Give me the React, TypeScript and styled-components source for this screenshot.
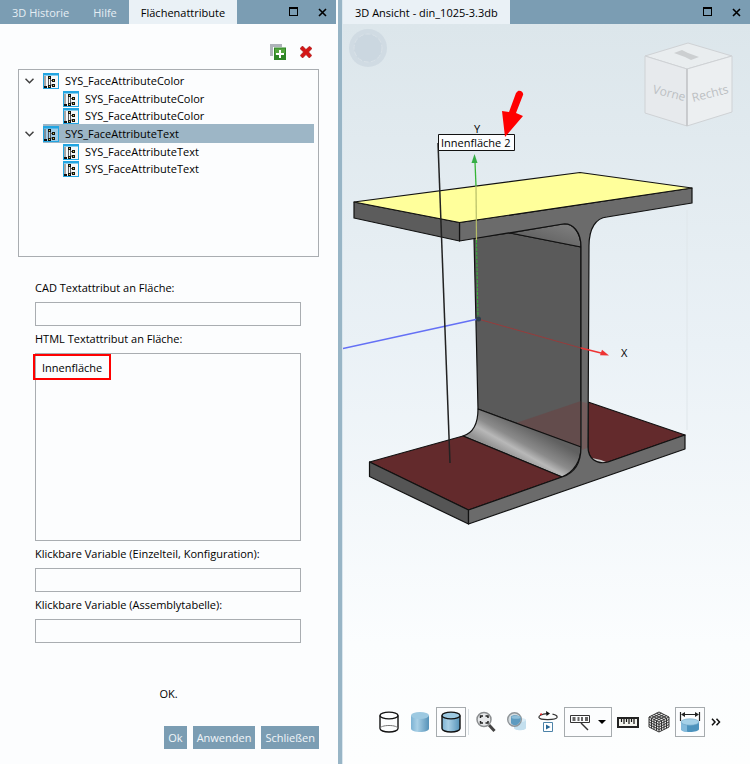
import React, { useState } from "react";
import styled, { createGlobalStyle, css } from "styled-components";

const color = {
  bar: "#7b9db3",
  tab: "#eaf1f6",
  panel: "#fcfdfe",
  line: "#a9adb1",
  select: "#9db6c6",
  ink: "#000000",
};

const GlobalStyle = createGlobalStyle`
  *, *::before, *::after { box-sizing: border-box; }
  body { margin: 0; background: ${color.panel}; }
  body, button, input, textarea {
    font-family: "Open Sans", "Noto Sans", sans-serif;
    font-size: 11px;
    line-height: 16px;
    color: ${color.ink};
  }
`;

const Page = styled.div`
  display: grid;
  grid-template-columns: minmax(280px, 336fr) 7px minmax(0, 407fr);
  min-height: 100vh;
`;

const Pane = styled.section`
  display: flex;
  flex-direction: column;
  min-width: 0;
`;

const ViewPane = styled(Pane)`
  background: linear-gradient(#dce6eb 24px, #eaf1f6 45%, #fbfdfe 84%, #fdfefe);
`;

const Splitter = styled.div`
  border-left: 2px solid ${color.panel};
  border-right: 1px solid #dbe7ee;
  background: #98b5c6;
`;

const TitleBar = styled.header`
  display: flex;
  align-items: center;
  height: 24px;
  background: ${color.bar};
`;

const TabList = styled.div`
  display: flex;
  flex: 1;
  height: 100%;
`;

const Tab = styled.button<{ $active?: boolean }>`
  border: 0;
  padding: 2px 12px 0;
  white-space: nowrap;
  background: ${(p) => (p.$active ? color.tab : "transparent")};
  color: ${(p) => (p.$active ? color.ink : "#e6eef3")};
`;

const BarButton = styled.button`
  display: grid;
  place-items: center;
  width: 28px;
  height: 24px;
  padding: 0;
  border: 0;
  background: transparent;
`;

const Actions = styled.div`
  display: flex;
  justify-content: flex-end;
  gap: 8px;
  padding: 18px 20px 7px;
`;

const IconButton = styled.button`
  display: grid;
  place-items: center;
  width: 20px;
  height: 20px;
  padding: 0;
  border: 0;
  background: transparent;
`;

const Tree = styled.ul`
  list-style: none;
  margin: 0 17px 0 18px;
  padding: 1px 4px 0 6px;
  height: 188px;
  border: 1px solid ${color.line};
`;

const Branch = styled.ul`
  list-style: none;
  margin: 0;
  padding: 0 0 0 38px;
`;

const NodeLine = styled.div`
  display: flex;
  align-items: center;
`;

const Toggle = styled.button`
  display: grid;
  place-items: center start;
  width: 18px;
  height: 19px;
  padding: 0;
  border: 0;
  background: transparent;
`;

const NodeLabel = styled.span<{ $root?: boolean; $selected?: boolean }>`
  display: flex;
  flex: 1;
  align-items: center;
  gap: 6px;
  height: ${(p) => (p.$root ? 19 : 17)}px;
  background: ${(p) => (p.$selected ? color.select : "transparent")};
  font-size: 11px;
`;

const Form = styled.form`
  display: flex;
  flex: 1;
  flex-direction: column;
  padding: 22px 17px 14px 18px;
`;

const Field = styled.div`
  display: flex;
  flex-direction: column;
  gap: 6px;
  margin: 0 18px 4px 17px;
  padding-top: 1px;
`;

const box = css`
  display: block;
  width: 100%;
  border: 1px solid ${color.line};
  border-radius: 0;
  background: ${color.panel};
  outline: 0;
`;

const TextInput = styled.input`
  ${box}
  height: 24px;
  padding: 0 6px;
`;

const TextArea = styled.textarea`
  ${box}
  height: 188px;
  padding: 6px;
  resize: none;
`;

const MarkedArea = styled.div`
  position: relative;
`;

const Mark = styled.span`
  position: absolute;
  top: 1px;
  left: -2px;
  width: 78px;
  height: 26px;
  border: 2px solid #ff0000;
  pointer-events: none;
`;

const Status = styled.p`
  margin: 39px 0 24px;
  text-align: center;
`;

const Buttons = styled.div`
  display: flex;
  justify-content: flex-end;
  gap: 6px;
`;

const PushButton = styled.button`
  height: 23px;
  padding: 0 4px;
  border: 0;
  background: ${color.bar};
  color: #f1f6f9;
`;

const Scene = styled.svg`
  display: block;
  flex: 1;
  width: 100%;
  min-height: 0;
  font-family: "Open Sans", sans-serif;
  font-size: 11px;
`;

const Tools = styled.div`
  display: flex;
  align-items: center;
  justify-content: center;
  gap: 1px;
  padding: 7px 20px 27px 26px;
`;

const Tool = styled.button<{ $framed?: boolean; $wide?: boolean }>`
  display: flex;
  align-items: center;
  justify-content: center;
  flex: none;
  gap: 8px;
  width: ${(p) => (p.$wide ? 48 : 30)}px;
  height: 30px;
  padding: 0;
  border: 1px solid ${(p) => (p.$framed ? "#a6abae" : "transparent")};
  background: ${(p) => (p.$framed ? "#fcfdfe" : "transparent")};
`;

const More = styled(Tool)`
  width: 20px;
`;

const Divider = styled.span`
  width: 1px;
  height: 26px;
  margin: 0 1px;
  background: #d9dfe3;
`;

const MaximizeIcon = () => (
  <svg width="10" height="10" viewBox="0 0 10 10" fill="none" stroke="#000">
    <path d="M.5 1h8M.5 0v9M8.500 0v9M0 8.500h9" strokeWidth="1" />
    <path d="M0 1h9" strokeWidth="2" />
  </svg>
);

const CloseIcon = () => (
  <svg width="9" height="9" viewBox="0 0 9 9" stroke="#000" strokeWidth="1.600">
    <path d="M1 1l7 7M8 1l-7 7" />
  </svg>
);

const AddIcon = () => (
  <svg width="16" height="16" viewBox="0 0 16 16">
    <path d="M0 0h12v3H3v9H0z" fill="#aeb3b9" />
    <path d="M4 3.500h12V16H4z" fill="#2f8526" />
    <path d="M5 4.500h10V9L5 11z" fill="#53a53d" />
    <path d="M10 6v8M6 10h8" stroke="#fff" strokeWidth="2" />
  </svg>
);

const DeleteIcon = () => (
  <svg width="12" height="12" viewBox="0 0 12 12">
    <path d="M2.500 0L6 3.500 9.500.3 12 2.500 8.600 6l3.200 3.500L9.300 12 6 8.600 2.600 12 .2 9.500 3.500 6 0 2.600z" fill="#d51616" stroke="#9c1010" strokeWidth=".6" />
  </svg>
);

const ChevronIcon = () => (
  <svg width="9" height="6" viewBox="0 0 9 6" fill="none" stroke="#404040" strokeWidth="1.500">
    <path d="M.5.8l4 4 4-4" />
  </svg>
);

const NodeIcon = ({ selected }: { selected?: boolean }) => (
  <svg width="16" height="16" viewBox="0 0 16 16">
    <path d="M0 0h16v16H0z" fill="#22a5e2" />
    <path d="M1 2.500h14V15H1z" fill={selected ? "#9fcbe6" : "#f5f7f8"} />
    <path d="M2 3v11M5.500 4v10M6 4.500h1M7.500 5v8M8 7.500h2M8 12h2" stroke="#555" fill="none" />
    <path d="M1 13h3v2H1zM5 12h3v3H5zM5 3h3v3H5zM9 6h3v3H9zM9 11h3v3H9z" fill="#111" />
    <path d="M6 4h1v1H6zM10 7h1v1h-1zM10 12h1v1h-1zM6 13h1v1H6z" fill="#d9c34a" />
  </svg>
);

const Cylinder = ({ filled, outlined }: { filled?: boolean; outlined?: boolean }) => {
  const line = outlined ? "#111" : "none";
  return (
    <svg width="20" height="22" viewBox="0 0 20 22" strokeWidth="1.400">
      <defs>
        <linearGradient id="steel">
          <stop offset="0" stopColor="#7cb2d3" />
          <stop offset=".35" stopColor="#a9d0e6" />
          <stop offset="1" stopColor="#5592b8" />
        </linearGradient>
      </defs>
      <path d="M1 4.500v13C1 19.500 5 21 10 21s9-1.500 9-3.500v-13" fill={filled ? "url(#steel)" : "none"} stroke={line} />
      <ellipse cx="10" cy="4.500" rx="9" ry="3.400" fill={filled ? "#9dc9e1" : "none"} stroke={line} />
      {!filled && <path d="M1 17.500c0-1.700 4-3 9-3s9 1.300 9 3" fill="none" stroke="#777" strokeWidth="1" />}
    </svg>
  );
};

const ZoomIcon = () => (
  <svg width="20" height="22" viewBox="0 0 20 22" fill="none">
    <path d="M13 14l5.500 6" stroke="#444" strokeWidth="3" />
    <circle cx="8" cy="8.500" r="7" fill="#e6e8ea" stroke="#8b8e90" strokeWidth="1.500" />
    <path d="M4.500 7V5H7M9.500 5H12v2M12 10v2H9.500M7 12H4.500v-2" stroke="#222" strokeWidth="1.500" />
  </svg>
);

const LensIcon = () => (
  <svg width="20" height="22" viewBox="0 0 20 22">
    <path d="M7 9v8c0 3 12 3 12 0V9c-2-2-10-2-12 0z" fill="#c3dfee" />
    <ellipse cx="13" cy="9" rx="6" ry="2" fill="#d9ebf5" />
    <circle cx="7.500" cy="8.500" r="6.800" fill="#d3dbdf" stroke="#8e9498" strokeWidth="1.400" />
    <path d="M4 5.500c2-1.700 7-1.500 9.500.6C14.500 10 12 14 8 14.500 6 14 4 13 4 12z" fill="#5d9bc0" />
    <ellipse cx="9" cy="6.200" rx="4.500" ry="1.500" fill="#8fbfd9" />
  </svg>
);

const OrbitIcon = () => (
  <svg width="20" height="22" viewBox="0 0 20 22" fill="none">
    <path d="M14.500 3.200C18 4 19.500 5 19 6.500c-1 2.600-17 3-18 0C.5 4.500 4 3 9 2.600" stroke="#333" strokeWidth="1.200" />
    <path d="M8 0l4 2.400L8.500 5z" fill="#111" />
    <path d="M2 3.500l2-.5" stroke="#d22" strokeWidth="1.500" />
    <path d="M5.500 11.500h9v9h-9z" fill="#fff" stroke="#4d83a8" />
    <path d="M8 13.500l4.500 2.500L8 18.500z" fill="#256594" />
  </svg>
);

const NoteIcon = () => (
  <svg width="20" height="18" viewBox="0 0 20 18" fill="none" stroke="#333">
    <path d="M.5 2.500h19v7H.5z" />
    <path d="M2.500 5h3M7.500 5h2M11 5h2M15 5h3M2.500 7h3M7.500 7h2M11 7h2M15 7h3" strokeWidth="1.300" />
    <path d="M11 10l7 7" strokeWidth="1.400" />
  </svg>
);

const CaretIcon = () => (
  <svg width="8" height="4" viewBox="0 0 8 4">
    <path d="M0 0h8L4 4z" />
  </svg>
);

const RulerIcon = () => (
  <svg width="22" height="11" viewBox="0 0 22 11">
    <path d="M0 0h22v11H0z" fill="#222" />
    <path d="M2 2h18v7H2z" fill="#f4f4ee" />
    <path d="M4.500 2v3M7 2v5M9.500 2v3M12 2v5M14.500 2v3M17 2v5" stroke="#111" strokeWidth="1.200" />
  </svg>
);

const MeshIcon = () => (
  <svg width="22" height="22" viewBox="0 0 22 22" fill="none" stroke="#333" strokeWidth="1">
    <path d="M11 1l10 5v10l-10 5-10-5V6z" fill="#eee" />
    <path d="M1 6l10 5 10-5M11 11v10M3.500 4.700l10 5v10M6 3.500l10 5v10M8.500 2.200l10 5v10M13.500 2.200l-10 5v10M16 3.500l-10 5v10M18.500 4.700l-10 5v10M1 8.500l10 5 10-5M1 11l10 5 10-5M1 13.500l10 5 10-5" />
  </svg>
);

const MeasureIcon = () => (
  <svg width="22" height="22" viewBox="0 0 22 22">
    <path d="M2 11v7c0 4 18 4 18 0v-7" fill="#4d93bd" />
    <path d="M2 11v7c0 2 3 2.700 6 3V12z" fill="#83badb" />
    <ellipse cx="11" cy="11" rx="9" ry="3.200" fill="#a5d1e8" stroke="#6ca5c6" strokeWidth=".6" />
    <path d="M1.500 1v9M20.500 1v9M3 3.500h16" stroke="#222" fill="none" strokeWidth="1.200" />
    <path d="M2 3.500L6 1v5zM20 3.500L16 1v5z" fill="#222" />
  </svg>
);

const MoreIcon = () => (
  <svg width="10" height="8" viewBox="0 0 10 8" fill="none" stroke="#111" strokeWidth="1.500">
    <path d="M1 .8L4 4 1 7.200M5.500.8l3 3.200-3 3.200" />
  </svg>
);

const WindowButtons = () => (
  <>
    <BarButton type="button" aria-label="Maximieren"><MaximizeIcon /></BarButton>
    <BarButton type="button" aria-label="Schließen"><CloseIcon /></BarButton>
  </>
);

const nodes = [
  { name: "SYS_FaceAttributeColor", children: ["SYS_FaceAttributeColor", "SYS_FaceAttributeColor"], selected: false },
  { name: "SYS_FaceAttributeText", children: ["SYS_FaceAttributeText", "SYS_FaceAttributeText"], selected: true },
];

const AttributeTree = () => (
  <Tree role="tree" aria-label="Flächenattribute">
    {nodes.map((node) => (
      <li key={node.name} role="treeitem" aria-expanded="true" aria-selected={node.selected}>
        <NodeLine>
          <Toggle type="button" aria-label="Zuklappen"><ChevronIcon /></Toggle>
          <NodeLabel $root $selected={node.selected}>
            <NodeIcon selected={node.selected} />
            {node.name}
          </NodeLabel>
        </NodeLine>
        <Branch role="group">
          {node.children.map((child, i) => (
            <li key={i} role="treeitem">
              <NodeLabel><NodeIcon />{child}</NodeLabel>
            </li>
          ))}
        </Branch>
      </li>
    ))}
  </Tree>
);

const NavigationCube = () => (
  <g stroke="#cfd2d5" strokeLinejoin="round">
    <path d="M645 56l43-13 44 13-45 13z" fill="#e9edef" />
    <path d="M645 56l42 13v57l-42-13z" fill="#e7eaed" />
    <path d="M687 69l45-13v56l-45 14z" fill="#eceff1" />
    <path d="M687 69v57" stroke="#c3c6c9" strokeWidth="1.500" />
    <path d="M674 53l8-3 6 3 11 4-8 3-6-3z" fill="#cccfd1" stroke="none" />
    <g fill="#bcc0c3" stroke="none" fontSize="12">
      <text transform="translate(652 93) rotate(14)">Vorne</text>
      <text transform="translate(693 102) rotate(-14)" >Rechts</text>
    </g>
  </g>
);

const Beam = () => (
  <g stroke="#111" strokeWidth="1.200" strokeLinejoin="round">
    <path d="M588 402l97 33-77 27c-12 3-20-3-20-15z" fill="#632a2c" />
    <path d="M592 458c2 4 8 6 14 4l-5-2z" fill="#c9c9c9" stroke="none" />
    <path d="M474 238l36-5 71 14v200l-103-38z" fill="#5a5a5a" />
    <path d="M516 423l65-22v46z" fill="#674848" fillOpacity=".75" stroke="none" />
    <path d="M510 233l53-9c10-1 18 8 18 23z" fill="url(#upperFillet)" />
    <path d="M478 409l103 38c0 14-7 25-19 30l-99-41c10-3 15-13 15-27z" fill="url(#lowerFillet)" />
    <path d="M369.500 462l93.500-26 99 41-93.500 33z" fill="#632a2c" />
    <path d="M369.500 462v14.500l99 47.500v-14z" fill="#555" />
    <path
      d="M459.500 222.500L692 188v15l-85 14c-11 1-18 11-18 29l-1 201c0 11 8 18 20 15l77-27v14l-216.500 75v-14l93.500-33c13-4 19-14 19-30V247c0-15-8-24-18-23l-103.500 17z"
      fill="#6b6b6b"
    />
    <path d="M582 402l5 1v45l-5 2z" fill="#785757" fillOpacity=".7" stroke="none" />
    <path d="M354 202v16l105.500 23v-18.500z" fill="#5c5c5c" />
    <path d="M354 202l226-29.500L692 188l-232.500 34.500z" fill="#ffff9b" />
  </g>
);

const Axes = () => (
  <g fill="none">
    <path d="M343 348.500L478 319" stroke="#6470f5" strokeWidth="1.700" />
    <path d="M478 319l103 29" stroke="#963c3c" strokeWidth="1" />
    <path d="M581 348l20 5" stroke="#ee3333" strokeWidth="1.500" />
    <path d="M609 355.500l-9-.3 2-5.400z" fill="#e33" />
    <path d="M478 319l-1.500-79" stroke="#35b535" strokeDasharray="3 1" />
    <path d="M476.500 240l-.5-54" stroke="#b6bd68" strokeWidth="1.200" />
    <path d="M476 186l-1-24" stroke="#35b535" strokeWidth="1.300" />
    <path d="M474.500 154l3 9h-6z" fill="#35ad45" />
    <circle cx="478.500" cy="319" r="2.500" fill="#2d3f4b" />
    <path d="M438 143l12 320" stroke="#222" strokeWidth="1.500" />
  </g>
);

const ModelScene = () => (
  <Scene viewBox="343 24 407 676" preserveAspectRatio="xMidYMin meet" role="img" aria-label="3D Modell din_1025-3">
    <defs>
      <linearGradient id="upperFillet" x1="0" y1="1" x2="1" y2="0">
        <stop offset="0" stopColor="#555" />
        <stop offset="1" stopColor="#828282" />
      </linearGradient>
      <linearGradient id="lowerFillet" gradientUnits="userSpaceOnUse" x1="533" y1="428" x2="515" y2="460">
        <stop offset="0" stopColor="#606060" />
        <stop offset=".5" stopColor="#8b8b8b" />
        <stop offset=".72" stopColor="#b8b8b8" />
        <stop offset="1" stopColor="#929292" />
      </linearGradient>
    </defs>
    <circle cx="368" cy="48" r="19" fill="#d0dbe3" />
    <circle cx="368" cy="48" r="14" fill="#cbd7e0" stroke="#d9e2e8" strokeDasharray="5 2" />
    <path d="M687 210v220" stroke="#dfe6ea" />
    <NavigationCube />
    <Beam />
    <Axes />
    <text x="621" y="357">X</text>
    <text x="474" y="133">Y</text>
    <path d="M438.500 134.500h76v16h-76z" fill="#fcfdfe" stroke="#111" />
    <text x="441" y="147">Innenfläche 2</text>
    <path d="M518 91c3-1 6 2 5 4l-7 18 7 3-18 21-3-26 7 1 7-19z" fill="#ff0000" />
  </Scene>
);

export default function App() {
  const [html, setHtml] = useState("Innenfläche");

  return (
    <>
      <GlobalStyle />
      <Page>
        <Pane aria-label="Flächenattribute">
          <TitleBar>
            <TabList role="tablist">
              <Tab type="button" role="tab" aria-selected="false">3D Historie</Tab>
              <Tab type="button" role="tab" aria-selected="false">Hilfe</Tab>
              <Tab type="button" role="tab" aria-selected="true" $active>Flächenattribute</Tab>
            </TabList>
            <WindowButtons />
          </TitleBar>
          <Actions>
            <IconButton type="button" aria-label="Hinzufügen"><AddIcon /></IconButton>
            <IconButton type="button" aria-label="Löschen"><DeleteIcon /></IconButton>
          </Actions>
          <AttributeTree />
          <Form onSubmit={(e) => e.preventDefault()}>
            <Field>
              <label htmlFor="cad">CAD Textattribut an Fläche:</label>
              <TextInput id="cad" />
            </Field>
            <Field>
              <label htmlFor="html">HTML Textattribut an Fläche:</label>
              <MarkedArea>
                <TextArea id="html" value={html} onChange={(e) => setHtml(e.target.value)} />
                <Mark />
              </MarkedArea>
            </Field>
            <Field>
              <label htmlFor="part">Klickbare Variable (Einzelteil, Konfiguration):</label>
              <TextInput id="part" />
            </Field>
            <Field>
              <label htmlFor="assembly">Klickbare Variable (Assemblytabelle):</label>
              <TextInput id="assembly" />
            </Field>
            <Status>OK.</Status>
            <Buttons>
              <PushButton type="submit">Ok</PushButton>
              <PushButton type="button">Anwenden</PushButton>
              <PushButton type="button">Schließen</PushButton>
            </Buttons>
          </Form>
        </Pane>
        <Splitter />
        <ViewPane aria-label="3D Ansicht">
          <TitleBar>
            <TabList role="tablist">
              <Tab type="button" role="tab" aria-selected="true" $active>3D Ansicht - din_1025-3.3db</Tab>
            </TabList>
            <WindowButtons />
          </TitleBar>
          <ModelScene />
          <Tools role="toolbar" aria-label="Ansicht">
            <Tool type="button" aria-label="Drahtmodell"><Cylinder outlined /></Tool>
            <Tool type="button" aria-label="Schattiert"><Cylinder filled /></Tool>
            <Tool type="button" aria-label="Schattiert mit Kanten" $framed><Cylinder filled outlined /></Tool>
            <Divider />
            <Tool type="button" aria-label="Einpassen"><ZoomIcon /></Tool>
            <Tool type="button" aria-label="Lupe"><LensIcon /></Tool>
            <Tool type="button" aria-label="Drehen"><OrbitIcon /></Tool>
            <Tool type="button" aria-label="Beschriftung" $framed $wide><NoteIcon /><CaretIcon /></Tool>
            <Tool type="button" aria-label="Messen"><RulerIcon /></Tool>
            <Tool type="button" aria-label="Netz"><MeshIcon /></Tool>
            <Tool type="button" aria-label="Bemaßung" $framed><MeasureIcon /></Tool>
            <More type="button" aria-label="Mehr"><MoreIcon /></More>
          </Tools>
        </ViewPane>
      </Page>
    </>
  );
}
